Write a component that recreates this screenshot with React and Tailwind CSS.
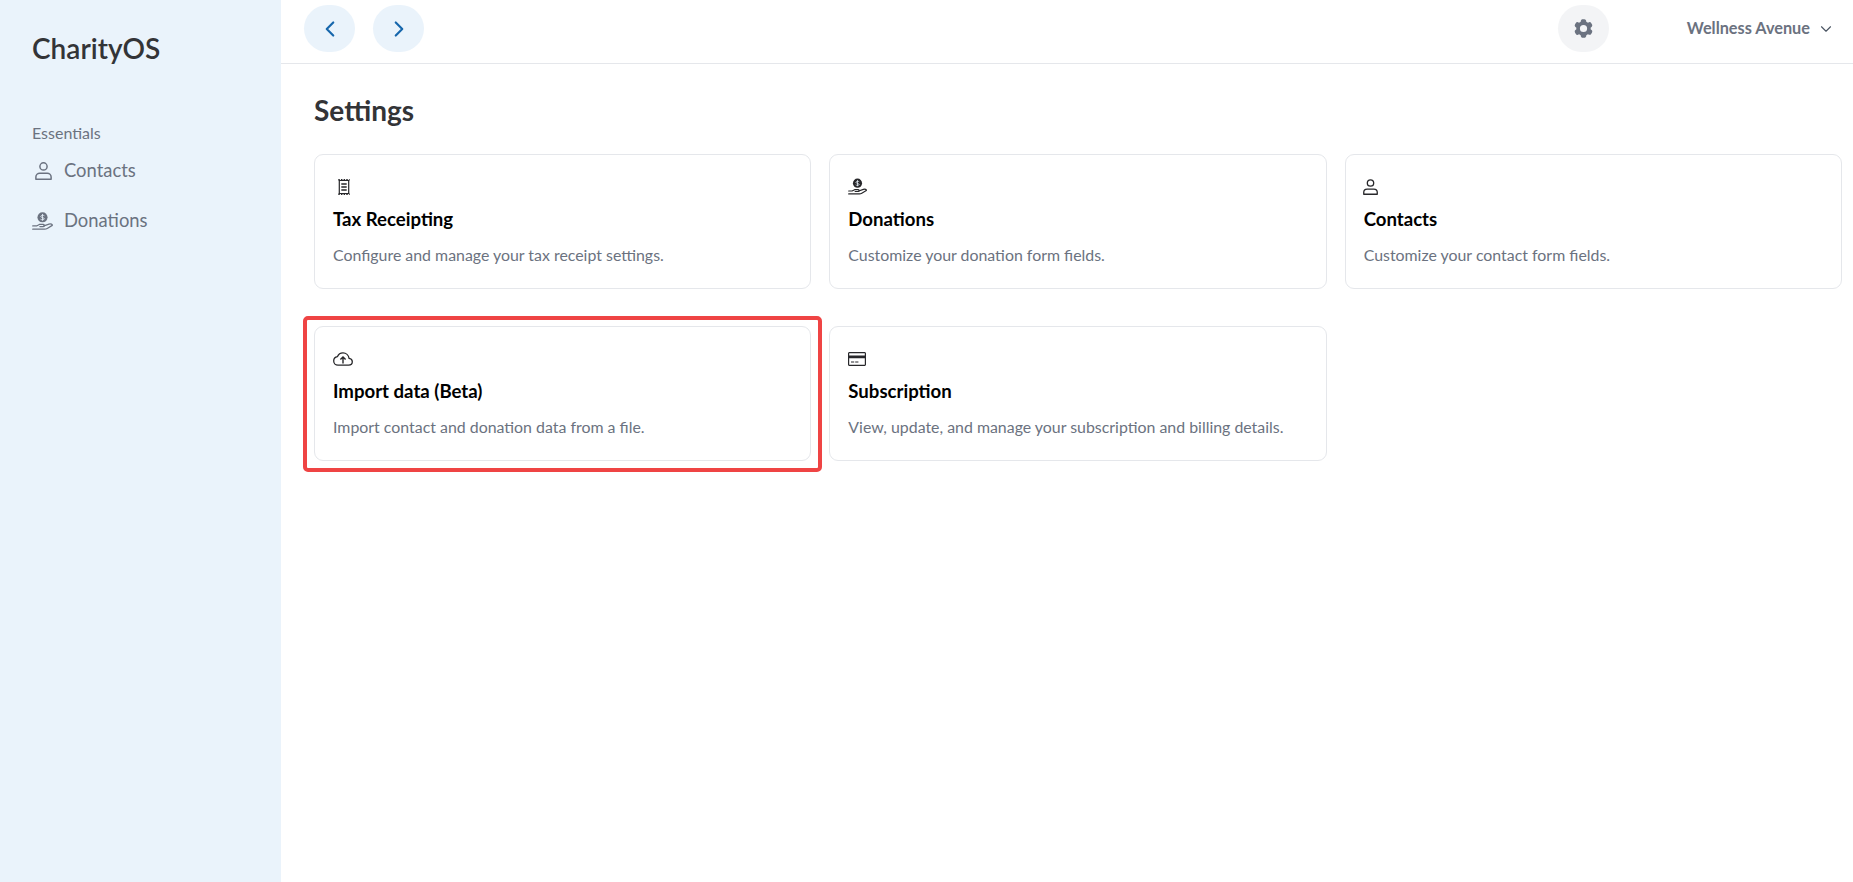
import React from "react";
import { ChevronLeft, ChevronRight, ChevronDown } from "lucide-react";
import { HiCog6Tooth } from "react-icons/hi2";

const Person = ({ className }) => (
  <svg viewBox="0 0 16 17" fill="none" stroke="currentColor" strokeWidth="1.4" className={className}>
    <circle cx="8" cy="4.2" r="3.400" />
    <path d="M.8 16.200v-2c0-2.200 1.800-3.500 3.600-3.500h7.200c1.800 0 3.600 1.300 3.600 3.500v2z" strokeLinejoin="round" />
  </svg>
);

const Donate = ({ className }) => (
  <svg viewBox="0 0 20 17" fill="none" className={className}>
    <circle cx="10" cy="5" r="4.800" fill="currentColor" />
    <path d="M10 1.800v6.400M11.800 3.500c-.7-.6-3.200-.7-3.500.6-.2 1.300 3.700 1 3.500 2.400-.2 1.100-2.800 1-3.700.3" stroke="#e8f2fb" strokeWidth=".8" />
    <path d="M.7 13.200h3.600l2.700-1.400h3.800c1.300 0 1.300 2 0 2H7.500" stroke="currentColor" strokeWidth="1.200" strokeLinecap="round" strokeLinejoin="round" />
    <path d="M11.300 13.200l4.900-1.700c1.800-.6 3.400.3 3.100 1.200l-4.800 2.900c-.8.500-1.500.7-2.500.7H.7" stroke="currentColor" strokeWidth="1.200" strokeLinecap="round" strokeLinejoin="round" />
  </svg>
);

const Receipt = ({ className }) => (
  <svg viewBox="0 0 12 16" fill="none" stroke="currentColor" className={className}>
    <path d="M1.300 1.500h9.400v13H1.300z" strokeWidth="1.200" />
    <path d="M.3 .7h11.400M.3 15.300h11.400" strokeWidth="1.400" strokeDasharray="1.500 1.150" />
    <path d="M3.300 5h5.400M3.300 8h5.400M3.300 11h5.400" strokeWidth="1.300" />
  </svg>
);

const CloudUp = ({ className }) => (
  <svg viewBox="0 0 20 14" fill="none" stroke="currentColor" strokeWidth="1.300" className={className}>
    <path d="M5 13.200h10.600c2.100 0 3.700-1.500 3.700-3.400 0-1.800-1.400-3.200-3.200-3.400C15.600 3.200 13 .8 10 .8 7.500.8 5.400 2.300 4.500 4.600 2.300 4.900.7 6.800.7 9c0 2.300 1.900 4.200 4.300 4.200z" strokeLinejoin="round" />
    <path d="M10 11.600V5.200M7.400 7.600L10 5l2.600 2.600" strokeWidth="1.400" />
  </svg>
);

const Card = ({ className }) => (
  <svg viewBox="0 0 18 14" className={className}>
    <path fillRule="evenodd" fill="currentColor" d="M1.500 0h15C17.300 0 18 .700 18 1.500v11c0 .8-.7 1.500-1.500 1.500h-15C.7 14 0 13.300 0 12.500v-11C0 .7.700 0 1.500 0zM1.200 3.600h15.600V1.200H1.200zM1.200 6.200v6.600h15.600V6.200zM3 9.400h3.200v1.200H3zM7.200 9.400h3.200v1.200H7.200z" />
  </svg>
);

const NavItem = ({ icon, label, iconClass }) => (
  <div className="flex items-center h-[50px] text-[18.400px] text-[#6b7280]">
    <span className="w-[32px] flex items-center">{React.createElement(icon, { className: iconClass })}</span>
    {label}
  </div>
);

const SettingCard = ({ icon, iconClass, title, desc }) => (
  <div className="h-[135px] rounded-[9px] border border-[#e5e7eb] bg-white px-[18px] pt-[22px]">
    <div className="h-[19px] flex items-center text-[#27272a]">
      {React.createElement(icon, { className: iconClass })}
    </div>
    <h2 className="mt-[9px] text-[18.600px] leading-[28px] font-bold text-black">{title}</h2>
    <p className="mt-[10px] text-[15.900px] leading-[24px] text-[#6b7280]">{desc}</p>
  </div>
);

export default function App() {
  return (
    <div className="flex min-h-[882px] bg-white" style={{ fontFamily: "Lato, sans-serif" }}>
      <aside className="w-[281px] shrink-0 bg-[#eaf3fb] pl-[32px]">
        <div className="pt-[27px] text-[28px] leading-[42px] font-semibold text-[#333437]">CharityOS</div>
        <div className="mt-[52px] text-[16px] leading-[24px] text-[#6b7280]">Essentials</div>
        <div className="mt-[1px]">
          <NavItem icon={Person} label="Contacts" iconClass="w-[17px] h-[18px] ml-[3px]" />
          <NavItem icon={Donate} label="Donations" iconClass="w-[21px] h-[18px]" />
        </div>
      </aside>
      <main className="flex-1 min-w-0">
        <header className="h-[64px] border-b border-[#e5e7eb] flex items-start pt-[5px] pl-[23px] pr-[25px]">
          <button className="w-[51px] h-[47px] rounded-[24px] bg-[#eaf3fb] flex items-center justify-center text-[#1767ac]">
            <ChevronLeft size={26} strokeWidth={2} />
          </button>
          <button className="ml-[18px] w-[51px] h-[47px] rounded-[24px] bg-[#eaf3fb] flex items-center justify-center text-[#1767ac]">
            <ChevronRight size={26} strokeWidth={2} />
          </button>
          <button className="ml-auto w-[51px] h-[47px] rounded-[24px] bg-[#f3f4f6] flex items-center justify-center text-[#6b7280]">
            <HiCog6Tooth size={23} />
          </button>
          <div className="ml-[78px] h-[47px] flex items-center text-[16.300px] font-bold text-[#6b7280]">
            Wellness Avenue
            <ChevronDown size={18} strokeWidth={1.500} className="ml-[7px] mr-[-7px] text-[#4b5563]" />
          </div>
        </header>
        <div className="pl-[33px] pr-[11px]">
          <h1 className="pt-[28px] text-[28px] leading-[36px] font-bold text-[#333437]">Settings</h1>
          <div className="relative mt-[26px] grid grid-cols-3 gap-x-[18px] gap-y-[37px]">
            <SettingCard icon={Receipt} iconClass="w-[12px] h-[16px] ml-[5px]" title="Tax Receipting" desc="Configure and manage your tax receipt settings." />
            <SettingCard icon={Donate} iconClass="w-[19px] h-[17px]" title="Donations" desc="Customize your donation form fields." />
            <SettingCard icon={Person} iconClass="w-[15px] h-[16px] ml-[-1px]" title="Contacts" desc="Customize your contact form fields." />
            <div className="relative">
              <SettingCard icon={CloudUp} iconClass="w-[20px] h-[14px]" title="Import data (Beta)" desc="Import contact and donation data from a file." />
              <div className="absolute left-[-11px] right-[-11px] top-[-10px] bottom-[-11px] border-4 border-[#ef4444] rounded-[5px] pointer-events-none" />
            </div>
            <SettingCard icon={Card} iconClass="w-[18px] h-[14px]" title="Subscription" desc="View, update, and manage your subscription and billing details." />
          </div>
        </div>
      </main>
    </div>
  );
}
